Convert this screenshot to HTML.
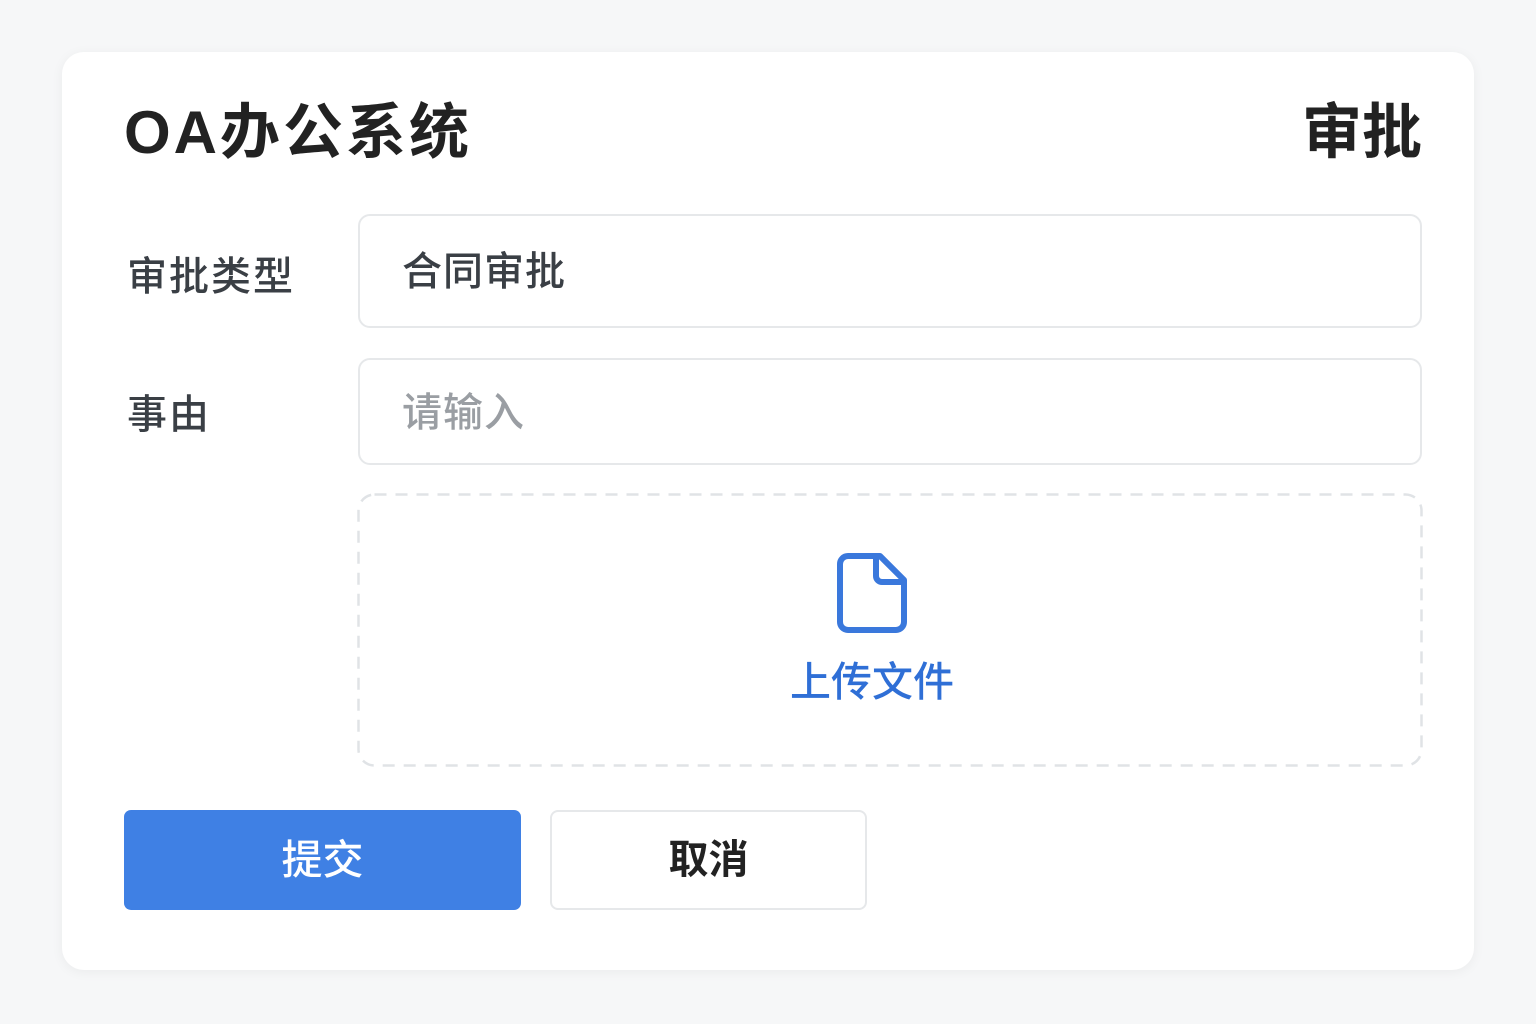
<!DOCTYPE html>
<html><head><meta charset="utf-8"><style>
*{margin:0;padding:0;box-sizing:border-box}
body{width:1536px;height:1024px;background:#f6f7f8;font-family:"Liberation Sans","Noto Sans CJK SC",sans-serif;position:relative;overflow:hidden}
.card{position:absolute;left:62px;top:52px;width:1412px;height:918px;background:#fff;border-radius:22px;box-shadow:0 2px 12px rgba(0,0,0,0.05)}
.abs{position:absolute;white-space:nowrap}
.t{font-size:60px;font-weight:700;color:#222;line-height:1}
.lab{font-size:40px;color:#3a3f45;line-height:1;font-weight:500;letter-spacing:2px}
.inp{position:absolute;left:358px;width:1064px;border:2px solid #e6e8ea;border-radius:12px}
.it{position:absolute;left:42px;font-size:40px;line-height:1;font-weight:500;letter-spacing:1px}
</style></head><body>
<div class="card"></div>
<div class="abs t" style="left:124px;top:103px;letter-spacing:3px">OA办公系统</div>
<div class="abs t" style="left:1302px;top:103px">审批</div>
<div class="abs lab" style="left:127px;top:257px">审批类型</div>
<div class="abs lab" style="left:127px;top:395px">事由</div>
<div class="inp" style="top:214px;height:114px"><div class="it" style="top:36px;color:#3a3f45">合同审批</div></div>
<div class="inp" style="top:358px;height:107px"><div class="it" style="top:33px;color:#9a9ea3">请输入</div></div>
<svg class="abs" style="left:357px;top:493px" width="1066" height="274"><rect x="1.5" y="1.5" width="1063" height="271" rx="16" fill="none" stroke="#e0e3e6" stroke-width="2.5" stroke-dasharray="12 9"/></svg>
<svg class="abs" style="left:836px;top:552px" width="72" height="82" viewBox="0 0 72 82"><path d="M12 4H44L68 28V70A8 8 0 0 1 60 78H12A8 8 0 0 1 4 70V12A8 8 0 0 1 12 4Z" fill="none" stroke="#3a78dc" stroke-width="6" stroke-linejoin="round"/><path d="M40 4V24A6 6 0 0 0 46 30H68" fill="none" stroke="#3a78dc" stroke-width="6" stroke-linejoin="round"/></svg>
<div class="abs" style="left:790px;top:662px;font-size:41px;color:#2f6fd6;line-height:1;font-weight:500">上传文件</div>
<div class="abs" style="left:124px;top:810px;width:397px;height:100px;background:#3f80e4;border-radius:7px;color:#fff;font-size:41px;font-weight:500;text-align:center;line-height:100px">提交</div>
<div class="abs" style="left:550px;top:810px;width:317px;height:100px;border:2px solid #e6e8ea;border-radius:8px;color:#222;font-size:40px;font-weight:700;text-align:center;line-height:96px">取消</div>
</body></html>
